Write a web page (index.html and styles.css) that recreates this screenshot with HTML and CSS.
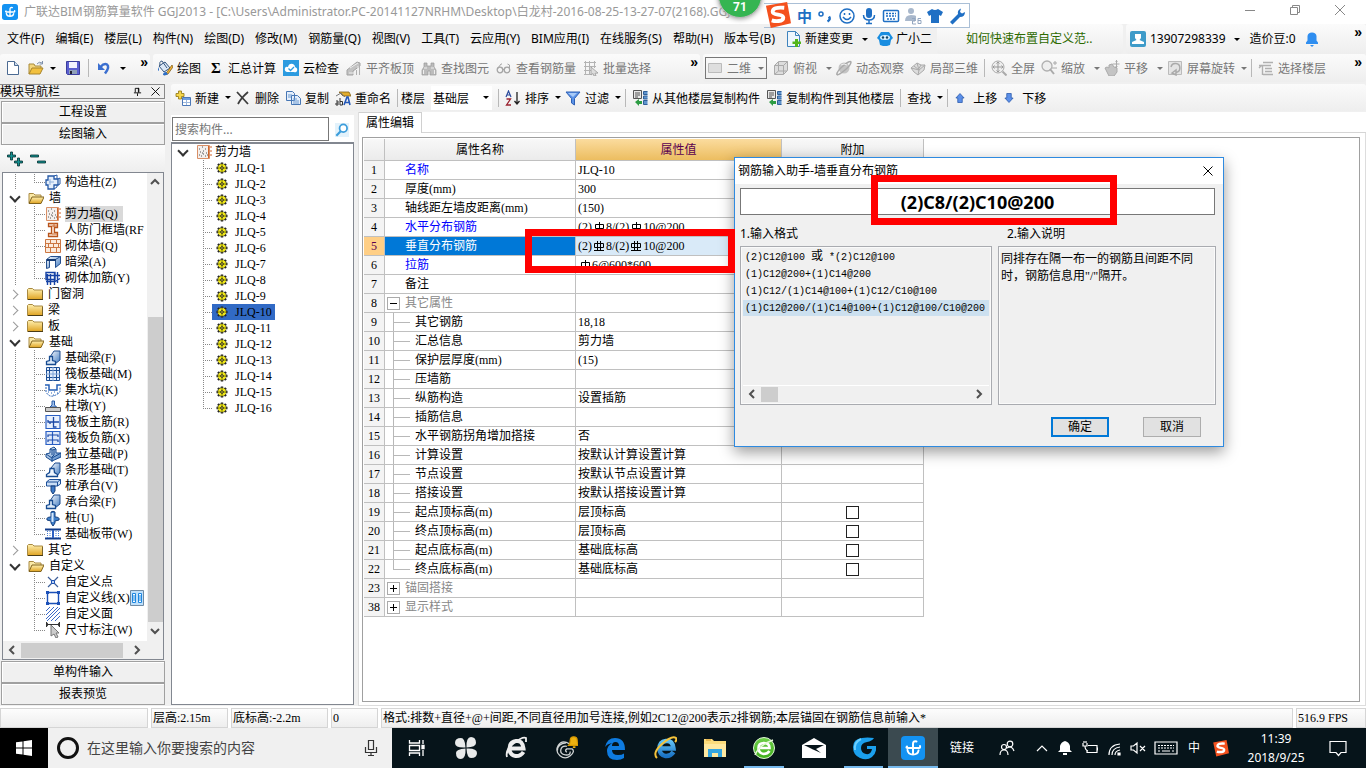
FILE: index.html
```html
<!DOCTYPE html>
<html lang="zh-CN">
<head>
<meta charset="utf-8">
<title>广联达BIM钢筋算量软件 GGJ2013</title>
<link rel="stylesheet" href="styles.css">
</head>
<body>
<svg class="sprite" aria-hidden="true">
  <defs>
    <linearGradient id="gold" x1="0" y1="0" x2="0" y2="1"><stop offset="0" stop-color="#fff0b0"/><stop offset="1" stop-color="#dfa322"/></linearGradient>
    <linearGradient id="steel" x1="0" y1="0" x2="1" y2="1"><stop offset="0" stop-color="#ffffff"/><stop offset="1" stop-color="#3c78c0"/></linearGradient>
    <linearGradient id="ie" x1="0" y1="0" x2="0" y2="1"><stop offset="0" stop-color="#63c3f5"/><stop offset="1" stop-color="#1b74c5"/></linearGradient>
    <linearGradient id="lime" x1="0" y1="0" x2="0" y2="1"><stop offset="0" stop-color="#6fd04a"/><stop offset="1" stop-color="#3fae1c"/></linearGradient>
  </defs>
  <symbol id="i-app" viewBox="0 0 24 24"><rect width="24" height="24" rx="4" fill="#1392f2"/><path d="M15.500 5.500Q12 4.500 12 8v10M6 10.500q-1.500 1.500 1 1.500h11q1.500 0 1-2M6.500 14q.500 4.500 5.500 4.500t5.500-4" fill="none" stroke="#fff" stroke-width="2" stroke-linecap="round"/></symbol>
  <symbol id="i-new" viewBox="0 0 16 16"><path d="M2.500 1.500h7l4 4v9h-11z" fill="#fff" stroke="#4b6a92"/><path d="M9.500 1.500v4h4" fill="#cfdcec" stroke="#4b6a92"/></symbol>
  <symbol id="i-open" viewBox="0 0 16 16"><path d="M1 14V4h5l1 2h6v3" fill="#f4d67c" stroke="#a88a3a"/><path d="M1 14l3-6h11l-3 6z" fill="#f2c03e" stroke="#a8842a"/><path d="M9 4q2-3 5-1M14.500 1v3h-3" fill="none" stroke="#7c8faa"/></symbol>
  <symbol id="i-save" viewBox="0 0 16 16"><path d="M1.500 1.500h13v13h-12l-1-1z" fill="#5b5fd0" stroke="#3a3d9c"/><path d="M4 2h8v6H4z" fill="#f2f2ff"/><path d="M4 10h8v4H4z" fill="#8fa0b8"/><path d="M5 11h2v3H5z" fill="#223"/></symbol>
  <symbol id="i-undo" viewBox="0 0 16 16"><path d="M4.500 7Q8 3 11 4.500 14 7 9 13.500" fill="none" stroke="#3b6fd0" stroke-width="2.500"/><path d="M2 3v7h7z" fill="#3b6fd0"/></symbol>
  <symbol id="i-paint" viewBox="0 0 16 16"><path d="M2 6l6-4 5 6-6 4z" fill="#dce8f6" stroke="#35567f"/><path d="M3 6Q2 1 5 1l5 7" fill="none" stroke="#35567f"/><path d="M2 7q-2 3 0 4z" fill="#2d6fc8"/><path d="M15 5l-5 7-3 3 4-1 5-7z" fill="#f1b332" stroke="#765317" stroke-width=".7"/><path d="M6 15q0-3 3-3l2 2q-2 2-5 1z" fill="#2d6fc8"/></symbol>
  <symbol id="i-cloud" viewBox="0 0 16 16"><rect width="16" height="16" fill="#2c9be0"/><path d="M4 12q-3-1-2-4 1-2 3-1 1-4 5-3 2 1 2 3 3 1 2 4-1 2-3 1z" fill="#fff"/><path d="M5.500 8.500l2 2L11 7" fill="none" stroke="#2c9be0" stroke-width="1.300"/></symbol>
  <symbol id="i-align" viewBox="0 0 16 16"><path d="M1 10l10-8 3 1v3L7 11v4H1z" fill="#c2c2c2" stroke="#a2a2a2"/><path d="M4 8l8-5M3 13h9M12 6v9M14 8v7" stroke="#eee"/><path d="M13.500 7v8M10.500 10v5" stroke="#b0b0b0"/></symbol>
  <symbol id="i-find" viewBox="0 0 16 16"><path d="M3 3h3v3h4V3h3v4l2 3v5H9v-4H7v4H1v-5l2-3z" fill="#bcbcbc" stroke="#999" stroke-width=".7"/><path d="M3 8h3M10 8h3M2.500 10v4M13.500 10v4" stroke="#eee"/></symbol>
  <symbol id="i-glass" viewBox="0 0 16 16"><circle cx="4" cy="10" r="2.800" fill="none" stroke="#a5a5a5" stroke-width="1.300"/><circle cx="11" cy="10" r="2.800" fill="none" stroke="#a5a5a5" stroke-width="1.300"/><path d="M6.500 9.500h2M2 8l3-4h1M13.500 9V5l-2-1" fill="none" stroke="#a5a5a5"/></symbol>
  <symbol id="i-batch" viewBox="0 0 16 16"><path d="M1 2.500h12M1 6.500h12M1 10.500h7M1 14.500h7M2.500 1v14M6.500 1v14M11.500 1v7" stroke="#b3b3b3"/><path d="M8 7l7 6-3 .3 1 2.700h-2l-1-2.500-2 1.500z" fill="#ddd" stroke="#999" stroke-width=".8"/></symbol>
  <symbol id="i-flat" viewBox="0 0 16 16"><path d="M1.500 3.500h13v9h-13z" fill="#dedede" stroke="#bbb"/></symbol>
  <symbol id="i-cube" viewBox="0 0 16 16"><path d="M1.500 5.500l4-4h9v9l-4 4h-9z" fill="#ddd" stroke="#aaa"/><path d="M1.500 5.500h9v9M10.500 5.500l4-4M5.500 2v9M2 14l3.500-3H14" fill="none" stroke="#aaa"/></symbol>
  <symbol id="i-orbit" viewBox="0 0 16 16"><circle cx="8" cy="8" r="5.500" fill="#c4c4c4"/><path d="M1 15Q0 12 7 6t8-4q0 3-6 8T1 15" fill="none" stroke="#aaa" stroke-width="1.500"/><path d="M5 5q3-2 6 0" stroke="#eee" fill="none"/></symbol>
  <symbol id="i-part" viewBox="0 0 16 16"><path d="M1 8l6-5 4 2 4 0-1 5-6 5-4-3z" fill="#ddd" stroke="#aaa"/><path d="M4 6l5 4M7 3l2 7-1 5M15 5L9 10l-8-2M11 5l-3 5" fill="none" stroke="#aaa"/></symbol>
  <symbol id="i-full" viewBox="0 0 16 16"><circle cx="7" cy="7" r="6" fill="#eee" stroke="#aaa"/><path d="M7 2v10M2 7h10M5.500 3.500L7 2l1.500 1.500M5.500 10.500L7 12l1.500-1.500M3.500 5.500L2 7l1.500 1.500M10.500 5.500L12 7l-1.500 1.500" fill="none" stroke="#999"/><path d="M11.500 11.500l4 4" stroke="#aaa" stroke-width="2"/></symbol>
  <symbol id="i-zoom" viewBox="0 0 16 16"><circle cx="6" cy="6" r="5" fill="#eee" stroke="#b0b0b0" stroke-width="1.300"/><path d="M9 9l4 5" stroke="#aaa" stroke-width="2"/><path d="M12 3h4M14 1v4M11 8h5" stroke="#aaa"/></symbol>
  <symbol id="i-pan" viewBox="0 0 16 16"><path d="M1 8l2-1 2 1 0-3 3-1 2 3 3 1v4l-3 4H5z" fill="#c4c4c4" stroke="#aaa"/><path d="M12.500 0v8M8.500 4h7M11.500 1.500h2M11.500 6.500h2" stroke="#aaa"/></symbol>
  <symbol id="i-rot" viewBox="0 0 16 16"><path d="M1.500 1.500h13v13h-13z" fill="#e4e4e4" stroke="#bbb"/><path d="M4 7a4.500 4.500 0 1 1 5 5.500M9 10v5l-4-2z" fill="none" stroke="#aaa" stroke-width="1.500"/></symbol>
  <symbol id="i-floor" viewBox="0 0 16 16"><path d="M5 2.500h10M1 5.500h12M7 8.500h7M7 11.500h7M5 14.500h10M4.500 5v10M1 8l3-3" fill="none" stroke="#b0b0b0" stroke-width="1.400"/></symbol>
  <symbol id="i-doc" viewBox="0 0 16 16"><path d="M1.500.500h8l4 4v11h-12z" fill="#eef6fd" stroke="#3f83bd"/><path d="M9.500.500v4h4" fill="none" stroke="#3f83bd"/><path d="M9 8h3v2.500h3V13h-3v3H9v-3H6.500v-2.500H9z" fill="#53b51b"/></symbol>
  <symbol id="i-bot" viewBox="0 0 16 16"><path d="M2 4l2-3h8l2 3 2 3-2 2-1 5-3 1H6l-3-1-1-5-2-2z" fill="#198de0"/><ellipse cx="8" cy="6.500" rx="5" ry="2.500" fill="#d8f0ff"/><circle cx="6" cy="6.500" r="1.200" fill="#146"/><circle cx="10" cy="6.500" r="1.200" fill="#146"/></symbol>
  <symbol id="i-user" viewBox="0 0 16 16"><rect width="16" height="16" rx="2" fill="#3e9bc9"/><path d="M5 3h6v4L9.500 9 14 11v2H2v-2l4.500-2L5 7z" fill="#fff"/></symbol>
  <symbol id="i-bell" viewBox="0 0 16 16"><path d="M2 13V11.500l1.500-2V5Q4 1.500 8 1.500T12.500 5v4.500l1.500 2V13zM6 14h4L8 16z" fill="#2f8ef0"/></symbol>
  <symbol id="i-add" viewBox="0 0 16 16"><path d="M3.500 1h3v2.500H9v3H6.500V9h-3V6.500H1v-3h2.500z" fill="#f5d64a" stroke="#8d7311" stroke-width=".8"/><path d="M7.500 7.500h8v8h-8z" fill="#fff" stroke="#4c78b8"/><path d="M8 8h7v2H8z" fill="#6e9ee0"/><path d="M8 12.500h7M11.500 10v5" stroke="#9db8dd"/></symbol>
  <symbol id="i-del" viewBox="0 0 16 16"><path d="M2 2l11 12M13 2Q6 8 3 14" fill="none" stroke="#3d3d3d" stroke-width="1.800"/></symbol>
  <symbol id="i-copy" viewBox="0 0 16 16"><path d="M1.500 1.500h6l2 2v7h-8zM6.500 5.500h6l3 3v6h-9z" fill="#e4eefb" stroke="#4676b4"/><path d="M3 5h4M3 7h3M8 9h4M8 11h6M8 13h6" stroke="#6d9ad0"/></symbol>
  <symbol id="i-ren" viewBox="0 0 16 16"><path d="M4 2h10l2 4H8z" fill="#e2ad2d" stroke="#815f17" stroke-width=".8"/><path d="M1 6l5-3 4 4" fill="none" stroke="#777"/><path d="M9 15l3-8h1l2 8M10 12.500h4" fill="none" stroke="#2459b8" stroke-width="1.600"/><path d="M1 11h2v4H1v-2h2M5 8v7h2.500v-3.500H5" fill="none" stroke="#333"/></symbol>
  <symbol id="i-sort" viewBox="0 0 16 16"><path d="M1 7l2.500-6L6 7M2 5h3" fill="none" stroke="#2a4a9c" stroke-width="1.200"/><path d="M1.500 9h4l-4 6h4.500" fill="none" stroke="#9b2330" stroke-width="1.300"/><path d="M12 2v12M9.500 11l2.500 3 2.500-3" fill="none" stroke="#222" stroke-width="1.300"/></symbol>
  <symbol id="i-fun" viewBox="0 0 16 16"><path d="M1 2h14L9.500 8.500V15l-3-2V8.500z" fill="#5b93e8" stroke="#2e60b4"/><path d="M3 3h9L8 7z" fill="#a9cbf8"/></symbol>
  <symbol id="i-fcopy" viewBox="0 0 16 16"><path d="M1.500.500h8v8h-8z" fill="#e8e8e8" stroke="#555"/><path d="M3 3h5M3 5h5M3 7h3" stroke="#555"/><path d="M3 12l4-3v2h3v3H7v2z" fill="#2d9c43"/><path d="M15.500 1.500h-4v3h4M15.500 6h-4v3h4M15.500 10.500h-4v4h4" fill="#5f93cc" stroke="#2e5f98"/></symbol>
  <symbol id="i-up" viewBox="0 0 16 16"><path d="M8 2l5.500 6H11v6H5V8H2.500z" fill="#5b8fe8" stroke="#2556aa"/></symbol>
  <symbol id="i-down" viewBox="0 0 16 16"><path d="M8 14l5.500-6H11V2H5v6H2.500z" fill="#5b8fe8" stroke="#2556aa"/></symbol>
  <symbol id="i-mag" viewBox="0 0 16 16"><rect width="16" height="16" fill="#e3f2fb"/><circle cx="9.500" cy="6" r="4.300" fill="#fff" stroke="#3c9ddb" stroke-width="2"/><path d="M6.500 9.500l-5 5" stroke="#3c9ddb" stroke-width="2.500"/></symbol>
  <symbol id="i-pin" viewBox="0 0 10 10"><path d="M2.500 6V1.500h4V6M1 6.500h8M5 7v3M6 1v5" fill="none" stroke="#000"/></symbol>
  <symbol id="i-x" viewBox="0 0 10 10"><path d="M.500.500l9 9M9.500.500l-9 9" stroke="currentColor" fill="none"/></symbol>
  <symbol id="i-plus2" viewBox="0 0 16 16"><path d="M3.500 1h2v3h3v2h-3v3h-2V6h-3V4h3zM10.500 7h2v3h3v2h-3v3h-2v-3h-3v-2h3z" fill="#149191" stroke="#042e2e" stroke-width=".8"/></symbol>
  <symbol id="i-min2" viewBox="0 0 16 16"><path d="M.500 4h8v2h-8zM7.500 10h8v2h-8z" fill="#149191" stroke="#042e2e" stroke-width=".8"/></symbol>
  <symbol id="i-fold" viewBox="0 0 16 16"><path d="M.500 13.500v-10l1-1h4l1.500 1.500h8.500v9.500z" fill="url(#gold)" stroke="#a98a42"/><path d="M1 13.500h15V5" fill="none" stroke="#4b3c15"/></symbol>
  <symbol id="i-foldo" viewBox="0 0 16 16"><path d="M1 13V3.500h4.500l1.500 1.500h6v2.500" fill="#fae9a7" stroke="#a98a42"/><path d="M1 13.500L4 7h12l-3 6.500z" fill="url(#gold)" stroke="#81631c"/></symbol>
  <symbol id="i-wall" viewBox="0 0 16 16"><path d="M1.500 1.500h12v13h-12z" fill="#f4efec" stroke="#d98f66"/><path d="M12.500 2v12" stroke="#d0652a"/><path d="M14 3h2M14 7h2M14 11h2" stroke="#d0652a"/><path d="M3 5h1M6 3h1M9 5h1M4 8h1M7 7h1M10 9h1M3 11h1M5 12h1M7 10h1M9 12h1M11 11h1M6 9h1" stroke="#555"/></symbol>
  <symbol id="i-col" viewBox="0 0 16 16"><path d="M3 2h6v3h4v6H9v4H3v-4H1V6h2z" fill="#e6effb" stroke="#2458a6" stroke-width="1.300"/><path d="M9 2l3-1v4M13 5l2-1v6l-2 1M9 15l3-2v-2" fill="none" stroke="#2458a6"/><path d="M5 5v6M4 8h5" stroke="#8fb2de"/></symbol>
  <symbol id="i-door" viewBox="0 0 16 16"><path d="M3.500 1.500h9v4h-3v5h3v4h-9v-3h3v-7h-3z" fill="#fbe4d4" stroke="#b8531b" stroke-width="1.300"/><path d="M7 4h5M7 12h5M9 1v4" stroke="#c96a33"/></symbol>
  <symbol id="i-brick" viewBox="0 0 16 16"><path d="M.500 1.500h15v13h-15zM.500 5.500h15M.500 9.500h15M5.500 2v3.500M11.500 2v3.500M3.500 6v3.500M8.500 6v3.500M13.500 6v3.500M5.500 10v4.500M11.500 10v4.500" fill="#fcebdd" stroke="#cc7742"/></symbol>
  <symbol id="i-beam" viewBox="0 0 16 16"><path d="M1.500 5.500l4-3h10l-5 3zM1.500 5.500v9l3-1v-8M10.500 5.500v8l5-4v-7" fill="url(#steel)" stroke="#244f8f"/><path d="M2 6h9" stroke="#163b73" stroke-width="2"/></symbol>
  <symbol id="i-rebar" viewBox="0 0 16 16"><path d="M2.500 15V4M5.500 15V4M9.500 15V2M12.500 13V2M1 2.500h9v7H1zM1 5.500h14M1 11.500h9l5-3" fill="none" stroke="#1743a5" stroke-width="1.400"/></symbol>
  <symbol id="i-fbeam" viewBox="0 0 16 16"><path d="M5 7L9 1h6v9l-5 4z" fill="url(#steel)" stroke="#1f4d8e"/><path d="M1.500 14.500v-3l3-1V6.500h3v4l3 1v3z" fill="#dbe9f8" stroke="#174b91" stroke-width="1.300"/></symbol>
  <symbol id="i-raft" viewBox="0 0 16 16"><path d="M1.500 1.500h13v13h-13z" fill="#e3edfb" stroke="#1d4f96"/><path d="M4.500 1v14M11.500 1v14M1 4.500h14M1 11.500h14" stroke="#1d4f96"/><path d="M8 1v14M1 8h14" stroke="#7fa4d8"/></symbol>
  <symbol id="i-pit" viewBox="0 0 16 16"><path d="M0 3h4v5h8V3h4" fill="none" stroke="#2660b6" stroke-width="1.500"/><path d="M1 5v5q3 5 7 4t7-4V5M3 10h1M6 11h1M9 10h1M12 11h1M8 13h1" fill="none" stroke="#2660b6" stroke-dasharray="2 1"/></symbol>
  <symbol id="i-pier" viewBox="0 0 16 16"><path d="M5 9l2-2V3h2.500v4l2 2z" fill="#9fc0ec" stroke="#2458a6"/><path d="M0.500 9.500h15v4h-15z" fill="#ccc" stroke="#555"/></symbol>
  <symbol id="i-main" viewBox="0 0 16 16"><path d="M1 1.500h14v13H1z" fill="#e8f0fd" stroke="#2a5fc4" stroke-width="1.200"/><path d="M3 6V8h11M8.500 3v10h3M5 8v2" fill="none" stroke="#1b48a5" stroke-width="1.300"/></symbol>
  <symbol id="i-neg" viewBox="0 0 16 16"><path d="M1 1.500h14v13H1zM7.500 1v14" fill="#dfe9fa" stroke="#2a5fc4" stroke-width="1.200"/><path d="M3 7V5h10v2M3 12v-2h10v2" fill="none" stroke="#1b48a5" stroke-width="1.200"/></symbol>
  <symbol id="i-iso" viewBox="0 0 16 16"><path d="M1 8l4-1V3l4-2 2 2v4l5 0v4l-9 4-6-4z" fill="url(#steel)" stroke="#174b91"/><path d="M1 8l6 4 9-5M7 12v4M5 3l2 1v5M7 4l4-1M9 4v5l-2 2" fill="none" stroke="#174b91"/></symbol>
  <symbol id="i-strip" viewBox="0 0 16 16"><path d="M6 6l4-5h5v9l-3 4z" fill="url(#steel)" stroke="#1f4d8e"/><path d="M1.500 14.500l0-2 3-2L5 6.500h4l.500 4 3 2v2z" fill="#eef5fd" stroke="#174b91" stroke-width="1.300"/></symbol>
  <symbol id="i-cap" viewBox="0 0 16 16"><path d="M1.500 4l3-2.500h11V6l-3 2h-11z" fill="#c9ddf5" stroke="#1c4f98"/><path d="M1.500 4h11v4M12.500 4l3-2.500" fill="none" stroke="#1c4f98"/><path d="M6 8h4v5l-2 3-2-3z" fill="#3e7bc8" stroke="#163f7c"/></symbol>
  <symbol id="i-pile" viewBox="0 0 16 16"><path d="M6 2q2-1.500 4 0v5q5 0 4 3l-4 1v2l-2 3-2-3v-2l-4-1q-1-3 4-3z" fill="#3f7fc9" stroke="#153f7e"/><path d="M7.500 3v9" stroke="#d8e9fb" stroke-width="2"/></symbol>
  <symbol id="i-band" viewBox="0 0 16 16"><path d="M0 3.500h16M0 12.500h16" stroke="#123c8b" stroke-width="2"/><path d="M2.500 5v7M13.500 5v7M5 5v7M11 5v7" stroke="#4a7cd0" stroke-dasharray="1 1"/><path d="M8 4v8" stroke="#2c5fc2" stroke-width="2"/></symbol>
  <symbol id="i-pt" viewBox="0 0 16 16"><path d="M3 3l10 10M13 3L3 13" stroke="#3d5f99" stroke-width="1.200"/><path d="M6.500 6.500h3v3h-3z" fill="#bcd3f5" stroke="#1d52b5"/></symbol>
  <symbol id="i-line" viewBox="0 0 16 16"><path d="M2.500 2.500h11v11h-11z" fill="none" stroke="#1b50b8" stroke-width="1.400"/><path d="M1 1h3v3H1zM12 1h3v3h-3zM1 12h3v3H1zM12 12h3v3h-3z" fill="#1b50b8"/></symbol>
  <symbol id="i-hatch" viewBox="0 0 16 16"><path d="M1 5l4-4M1 9l8-8M1 13l12-12M2 15L15 2M6 15l9-9M10 15l5-5" stroke="#3b69c8"/></symbol>
  <symbol id="i-dim" viewBox="0 0 16 16"><path d="M1.500 0v5M14.500 0v5M1 2.500h14M3 1L1 2.500 3 4M13 1l2 1.500L13 4" fill="none" stroke="#333"/><path d="M6 3v11l3-2 2 4 2-1-2-4h3z" fill="#ccc" stroke="#777"/></symbol>
  <symbol id="i-gear" viewBox="0 0 12 12"><path d="M6 .500v11M.500 6h11M2 2l8 8M10 2l-8 8" stroke="#222" stroke-width="2.400"/><circle cx="6" cy="6" r="4.300" fill="#f0e818" stroke="#333" stroke-dasharray="1 1"/><path d="M6 2v8M2 6h8" stroke="#4d4a05" stroke-width=".7"/><circle cx="6" cy="6" r="1.300" fill="#fff23a" stroke="#222"/></symbol>
  <symbol id="i-sogou" viewBox="0 0 28 28"><path d="M2 4L24 0l4 22-21 5z" fill="#f4511e"/><path d="M21 6Q9 5 9 10c0 4 11 2 11 6 0 5-9 4-12 3" fill="none" stroke="#fff" stroke-width="4"/></symbol>
  <symbol id="r2" viewBox="0 0 12 12"><path d="M6.500 1v10M2.500 3.500h8v4h-8zM2 10.500h9" fill="none" stroke="#000"/></symbol>
  <symbol id="r3" viewBox="0 0 12 12"><path d="M4.500 1v10M7.500 1v10M1.500 3.500h9v4h-9zM1 10.500h10" fill="none" stroke="#000"/></symbol>
</svg>

<div class="app">
  <header class="title">
    <svg class="ic"><use href="#i-app"/></svg>
    <h1>广联达BIM钢筋算量软件 GGJ2013 - [C:\Users\Administrator.PC-20141127NRHM\Desktop\白龙村-2016-08-25-13-27-07(2168).GGJ</h1>
    <div class="winctl">
      <button aria-label="最小化"><svg viewBox="0 0 12 12"><path d="M1 6.500h10"/></svg></button>
      <button aria-label="还原"><svg viewBox="0 0 12 12"><path d="M1.500 3.500h7v7h-7zM3.500 3V1.500h7v7H9"/></svg></button>
      <button aria-label="关闭"><svg viewBox="0 0 12 12"><path d="M1 1l10 10M11 1L1 11"/></svg></button>
    </div>
    <div class="ball">71</div>
    <div class="ime">
      <svg class="s" viewBox="0 0 28 28"><use href="#i-sogou"/></svg>
      <span>中</span>
      <svg viewBox="0 0 18 18"><circle cx="5" cy="7" r="2" fill="none" stroke="#1f6fc4" stroke-width="1.500"/><path d="M13 9.500q2 3-1.500 5" fill="none" stroke="#1f6fc4" stroke-width="2.500"/></svg>
      <svg viewBox="0 0 18 18" fill="none" stroke="#1f6fc4" stroke-width="1.500"><circle cx="9" cy="9" r="7"/><path d="M5 10q4 5 8 0M6.500 6v2M11.500 6v2"/></svg>
      <svg viewBox="0 0 18 18"><rect x="6" y="1" width="6" height="10" rx="3" fill="#1f6fc4"/><path d="M3.500 8q0 5 5.500 5t5.500-5M9 13v4M6 16.500h6" fill="none" stroke="#1f6fc4" stroke-width="1.500"/></svg>
      <svg viewBox="0 0 18 18"><rect x="1.500" y="3.500" width="15" height="11" rx="1" fill="#fff" stroke="#1f6fc4" stroke-width="1.500"/><path d="M4 6.500h10M4 9h10M5 12h8" stroke="#1f6fc4" stroke-width="1.500" stroke-dasharray="2 1"/></svg>
      <svg viewBox="0 0 18 18"><circle cx="7" cy="4" r="3" fill="#a9b8cc"/><path d="M1 14q0-6 6-6t5 2v4z" fill="#a9b8cc"/><path d="M8 11.500h3v2.500H8.500v3H12M17 11.500h-3v5h3v-3h-3" fill="none" stroke="#93a6c0"/></svg>
      <svg viewBox="0 0 18 18"><path d="M6 2q3 2 6 0l5 3-2 4-2-1v8H5V8L3 9 1 5z" fill="#1f6fc4"/></svg>
      <svg viewBox="0 0 18 18"><path d="M2 15l8-8q-1-4 3-5.500L12 5l2 1.500L17 5q0 5-5 5l-7.500 7.500z" fill="#1f6fc4"/></svg>
    </div>
  </header>

  <nav class="menubar">
    <div class="grp menus">
      <button>文件(F)</button><button>编辑(E)</button><button>楼层(L)</button><button>构件(N)</button><button>绘图(D)</button><button>修改(M)</button><button>钢筋量(Q)</button><button>视图(V)</button><button>工具(T)</button><button>云应用(Y)</button><button>BIM应用(I)</button><button>在线服务(S)</button><button>帮助(H)</button><button>版本号(B)</button>
      <button class="it"><svg class="ic"><use href="#i-doc"/></svg>新建变更<i class="car"></i></button>
      <button class="it"><svg class="ic"><use href="#i-bot"/></svg>广小二</button>
    </div>
    <div class="grp tip"><a href="#">如何快速布置自定义范..</a></div>
    <div class="grp user">
      <button class="it"><svg class="ic"><use href="#i-user"/></svg>13907298339<i class="car"></i></button>
      <span>造价豆:0</span>
      <svg class="ic"><use href="#i-bell"/></svg>
      <span class="more">»</span>
    </div>
  </nav>

  <div class="tools">
    <div class="grp file">
      <button aria-label="新建"><svg class="ic"><use href="#i-new"/></svg></button>
      <button class="it" aria-label="打开"><svg class="ic"><use href="#i-open"/></svg><i class="car"></i></button>
      <button aria-label="保存"><svg class="ic"><use href="#i-save"/></svg></button>
      <i class="sep"></i>
      <button class="it undo" aria-label="撤销"><svg class="ic"><use href="#i-undo"/></svg><i class="car"></i></button>
      <span class="more">»</span>
    </div>
    <div class="grp edit">
      <button class="it"><svg class="ic"><use href="#i-paint"/></svg>绘图</button>
      <button class="it"><b class="sigma">Σ</b>汇总计算</button>
      <button class="it"><svg class="ic"><use href="#i-cloud"/></svg>云检查</button>
      <button class="it off"><svg class="ic"><use href="#i-align"/></svg>平齐板顶</button>
      <button class="it off"><svg class="ic"><use href="#i-find"/></svg>查找图元</button>
      <button class="it off"><svg class="ic"><use href="#i-glass"/></svg>查看钢筋量</button>
      <button class="it off"><svg class="ic"><use href="#i-batch"/></svg>批量选择</button>
      <span class="more">»</span>
    </div>
    <div class="grp view">
      <label class="combo2 off"><svg class="ic"><use href="#i-flat"/></svg><select aria-label="视图模式"><option>二维</option></select><i class="car"></i></label>
      <button class="it off"><svg class="ic"><use href="#i-cube"/></svg>俯视<i class="car w"></i></button>
      <button class="it off"><svg class="ic"><use href="#i-orbit"/></svg>动态观察</button>
      <button class="it off"><svg class="ic"><use href="#i-part"/></svg>局部三维</button>
      <i class="sep"></i>
      <button class="it off"><svg class="ic"><use href="#i-full"/></svg>全屏</button>
      <button class="it off"><svg class="ic"><use href="#i-zoom"/></svg>缩放<i class="car w"></i></button>
      <button class="it off"><svg class="ic"><use href="#i-pan"/></svg>平移<i class="car w"></i></button>
      <button class="it off"><svg class="ic"><use href="#i-rot"/></svg>屏幕旋转<i class="car"></i></button>
      <i class="sep"></i>
      <button class="it off"><svg class="ic"><use href="#i-floor"/></svg>选择楼层</button>
      <span class="more">»</span>
    </div>
  </div>

  <div class="work">
    <aside class="nav">
      <div class="navhead"><span>模块导航栏</span><button aria-label="固定"><svg><use href="#i-pin"/></svg></button><button aria-label="关闭"><svg><use href="#i-x"/></svg></button></div>
      <button class="bar">工程设置</button>
      <button class="bar">绘图输入</button>
      <div class="mini"><button aria-label="全部展开"><svg class="ic"><use href="#i-plus2"/></svg></button><button aria-label="全部折叠"><svg class="ic"><use href="#i-min2"/></svg></button></div>
      <div class="treebox">
        <ul class="tree">
          <li class="leaf end"><svg><use href="#i-col"/></svg><span>构造柱(Z)</span></li>
          <li class="dir open"><svg><use href="#i-foldo"/></svg><span>墙</span></li>
          <li class="leaf cur"><svg><use href="#i-wall"/></svg><span>剪力墙(Q)</span></li>
          <li class="leaf"><svg><use href="#i-door"/></svg><span>人防门框墙(RF</span></li>
          <li class="leaf"><svg><use href="#i-brick"/></svg><span>砌体墙(Q)</span></li>
          <li class="leaf"><svg><use href="#i-beam"/></svg><span>暗梁(A)</span></li>
          <li class="leaf end"><svg><use href="#i-rebar"/></svg><span>砌体加筋(Y)</span></li>
          <li class="dir"><svg><use href="#i-fold"/></svg><span>门窗洞</span></li>
          <li class="dir"><svg><use href="#i-fold"/></svg><span>梁</span></li>
          <li class="dir"><svg><use href="#i-fold"/></svg><span>板</span></li>
          <li class="dir open"><svg><use href="#i-foldo"/></svg><span>基础</span></li>
          <li class="leaf"><svg><use href="#i-fbeam"/></svg><span>基础梁(F)</span></li>
          <li class="leaf"><svg><use href="#i-raft"/></svg><span>筏板基础(M)</span></li>
          <li class="leaf"><svg><use href="#i-pit"/></svg><span>集水坑(K)</span></li>
          <li class="leaf"><svg><use href="#i-pier"/></svg><span>柱墩(Y)</span></li>
          <li class="leaf"><svg><use href="#i-main"/></svg><span>筏板主筋(R)</span></li>
          <li class="leaf"><svg><use href="#i-neg"/></svg><span>筏板负筋(X)</span></li>
          <li class="leaf"><svg><use href="#i-iso"/></svg><span>独立基础(P)</span></li>
          <li class="leaf"><svg><use href="#i-strip"/></svg><span>条形基础(T)</span></li>
          <li class="leaf"><svg><use href="#i-cap"/></svg><span>桩承台(V)</span></li>
          <li class="leaf"><svg><use href="#i-fbeam"/></svg><span>承台梁(F)</span></li>
          <li class="leaf"><svg><use href="#i-pile"/></svg><span>桩(U)</span></li>
          <li class="leaf end"><svg><use href="#i-band"/></svg><span>基础板带(W)</span></li>
          <li class="dir"><svg><use href="#i-fold"/></svg><span>其它</span></li>
          <li class="dir open"><svg><use href="#i-foldo"/></svg><span>自定义</span></li>
          <li class="leaf last"><svg><use href="#i-pt"/></svg><span>自定义点</span></li>
          <li class="leaf last"><svg><use href="#i-line"/></svg><span>自定义线(X)</span><svg class="badge" viewBox="0 0 14 16"><path d="M.500.500h13v15H.500z" fill="#bfe0fb" stroke="#6f8ba5"/><path d="M2.500 3.500h3v9h-3zM8.500 3.500h3v9h-3zM3 6h2M3 8h2M3 10h2M9 6h2M9 8h2M9 10h2" fill="#fff" stroke="#1c86e0"/></svg></li>
          <li class="leaf last"><svg><use href="#i-hatch"/></svg><span>自定义面</span></li>
          <li class="leaf last end"><svg><use href="#i-dim"/></svg><span>尺寸标注(W)</span></li>
        </ul>
        <div class="vscroll"><svg class="arr" viewBox="0 0 10 10"><path d="M1 7l4-4 4 4"/></svg><i></i><svg class="arr" viewBox="0 0 10 10"><path d="M1 3l4 4 4-4"/></svg></div>
        <div class="hscroll"><svg class="arr" viewBox="0 0 10 10"><path d="M7 1L3 5l4 4"/></svg><i></i><svg class="arr" viewBox="0 0 10 10"><path d="M3 1l4 4-4 4"/></svg></div>
      </div>
      <button class="bar">单构件输入</button>
      <button class="bar">报表预览</button>
    </aside>

    <main class="main">
      <div class="grp tools2">
        <button class="it"><svg class="ic"><use href="#i-add"/></svg>新建<i class="car"></i></button>
        <button class="it"><svg class="ic"><use href="#i-del"/></svg>删除</button>
        <button class="it"><svg class="ic"><use href="#i-copy"/></svg>复制</button>
        <button class="it"><svg class="ic"><use href="#i-ren"/></svg>重命名</button>
        <i class="sep"></i>
        <label for="floor">楼层</label>
        <span class="combo"><select id="floor"><option>基础层</option></select><i class="car"></i></span>
        <i class="sep"></i>
        <button class="it"><svg class="ic"><use href="#i-sort"/></svg>排序<i class="car"></i></button>
        <button class="it"><svg class="ic"><use href="#i-fun"/></svg>过滤<i class="car"></i></button>
        <i class="sep"></i>
        <button class="it"><svg class="ic"><use href="#i-fcopy"/></svg>从其他楼层复制构件</button>
        <button class="it"><svg class="ic"><use href="#i-fcopy"/></svg>复制构件到其他楼层</button>
        <i class="sep"></i>
        <button class="it">查找<i class="car"></i></button>
        <i class="sep"></i>
        <button class="it"><svg class="ic sm"><use href="#i-up"/></svg>上移</button>
        <button class="it"><svg class="ic sm"><use href="#i-down"/></svg>下移</button>
      </div>
      <div class="cols">
        <section class="parts">
          <div class="search"><input type="text" placeholder="搜索构件..." aria-label="搜索构件"><button aria-label="搜索"><svg><use href="#i-mag"/></svg></button></div>
          <ul class="plist">
            <li class="root"><svg><use href="#i-wall"/></svg><span>剪力墙</span></li>
            <li><svg><use href="#i-gear"/></svg><span>JLQ-1</span></li>
            <li><svg><use href="#i-gear"/></svg><span>JLQ-2</span></li>
            <li><svg><use href="#i-gear"/></svg><span>JLQ-3</span></li>
            <li><svg><use href="#i-gear"/></svg><span>JLQ-4</span></li>
            <li><svg><use href="#i-gear"/></svg><span>JLQ-5</span></li>
            <li><svg><use href="#i-gear"/></svg><span>JLQ-6</span></li>
            <li><svg><use href="#i-gear"/></svg><span>JLQ-7</span></li>
            <li><svg><use href="#i-gear"/></svg><span>JLQ-8</span></li>
            <li><svg><use href="#i-gear"/></svg><span>JLQ-9</span></li>
            <li class="sel"><div><svg><use href="#i-gear"/></svg><span>JLQ-10</span></div></li>
            <li><svg><use href="#i-gear"/></svg><span>JLQ-11</span></li>
            <li><svg><use href="#i-gear"/></svg><span>JLQ-12</span></li>
            <li><svg><use href="#i-gear"/></svg><span>JLQ-13</span></li>
            <li><svg><use href="#i-gear"/></svg><span>JLQ-14</span></li>
            <li><svg><use href="#i-gear"/></svg><span>JLQ-15</span></li>
            <li class="end"><svg><use href="#i-gear"/></svg><span>JLQ-16</span></li>
          </ul>
        </section>
        <section class="props">
          <div class="tabs"><button>属性编辑</button></div>
          <div class="sheet">
            <div class="grid">
              <table>
                <colgroup><col class="c0"><col class="c1"><col class="c2"><col class="c3"></colgroup>
                <thead><tr><th></th><th>属性名称</th><th class="hot">属性值</th><th>附加</th></tr></thead>
                <tbody>
                  <tr><th>1</th><td class="key">名称</td><td>JLQ-10</td><td></td></tr>
                  <tr><th>2</th><td>厚度(mm)</td><td>300</td><td></td></tr>
                  <tr><th>3</th><td>轴线距左墙皮距离(mm)</td><td>(150)</td><td></td></tr>
                  <tr><th>4</th><td class="key">水平分布钢筋</td><td>(2)<svg class="rb"><use href="#r2"/></svg>8/(2)<svg class="rb"><use href="#r2"/></svg>10@200</td><td></td></tr>
                  <tr class="on"><th>5</th><td>垂直分布钢筋</td><td>(2)<svg class="rb"><use href="#r3"/></svg>8/(2)<svg class="rb"><use href="#r3"/></svg>10@200</td><td></td></tr>
                  <tr><th>6</th><td class="key">拉筋</td><td><svg class="rb"><use href="#r2"/></svg>6@600*600</td><td></td></tr>
                  <tr><th>7</th><td>备注</td><td></td><td></td></tr>
                  <tr class="dim"><th>8</th><td class="sec"><button class="minus" aria-label="折叠其它属性"></button>其它属性</td><td></td><td></td></tr>
                  <tr class="sub"><th>9</th><td>其它钢筋</td><td>18,18</td><td></td></tr>
                  <tr class="sub"><th>10</th><td>汇总信息</td><td>剪力墙</td><td></td></tr>
                  <tr class="sub"><th>11</th><td>保护层厚度(mm)</td><td>(15)</td><td></td></tr>
                  <tr class="sub"><th>12</th><td>压墙筋</td><td></td><td></td></tr>
                  <tr class="sub"><th>13</th><td>纵筋构造</td><td>设置插筋</td><td></td></tr>
                  <tr class="sub"><th>14</th><td>插筋信息</td><td></td><td></td></tr>
                  <tr class="sub"><th>15</th><td>水平钢筋拐角增加搭接</td><td>否</td><td></td></tr>
                  <tr class="sub"><th>16</th><td>计算设置</td><td>按默认计算设置计算</td><td></td></tr>
                  <tr class="sub"><th>17</th><td>节点设置</td><td>按默认节点设置计算</td><td></td></tr>
                  <tr class="sub"><th>18</th><td>搭接设置</td><td>按默认搭接设置计算</td><td></td></tr>
                  <tr class="sub"><th>19</th><td>起点顶标高(m)</td><td>层顶标高</td><td><input type="checkbox" aria-label="起点顶标高附加"></td></tr>
                  <tr class="sub"><th>20</th><td>终点顶标高(m)</td><td>层顶标高</td><td><input type="checkbox" aria-label="终点顶标高附加"></td></tr>
                  <tr class="sub"><th>21</th><td>起点底标高(m)</td><td>基础底标高</td><td><input type="checkbox" aria-label="起点底标高附加"></td></tr>
                  <tr class="sub end"><th>22</th><td>终点底标高(m)</td><td>基础底标高</td><td><input type="checkbox" aria-label="终点底标高附加"></td></tr>
                  <tr class="dim"><th>23</th><td class="sec"><button class="plus" aria-label="展开锚固搭接"></button>锚固搭接</td><td></td><td></td></tr>
                  <tr class="dim"><th>38</th><td class="sec"><button class="plus" aria-label="展开显示样式"></button>显示样式</td><td></td><td></td></tr>
                </tbody>
              </table>
            </div>
          </div>
        </section>
      </div>
    </main>
  </div>

  <footer class="status">
    <span class="s0"></span><span class="s1">层高:2.15m</span><span class="s2">底标高:-2.2m</span><span class="s3">0</span><span class="s4">格式:排数+直径+@+间距,不同直径用加号连接,例如2C12@200表示2排钢筋;本层锚固在钢筋信息前输入*</span><span class="s5">516.9 FPS</span>
  </footer>

  <div class="taskbar">
    <button class="start" aria-label="开始"><svg viewBox="0 0 16 16"><path d="M0 2.300L6.500 1.400v6.100H0zM7.500 1.200L16 0v7.500H7.500zM0 8.500h6.500v6.100L0 13.700zM7.500 8.500H16V16l-8.500-1.200z" fill="#fff"/></svg></button>
    <div class="cortana"><i class="ring"></i><input type="text" placeholder="在这里输入你要搜索的内容" aria-label="搜索"><svg viewBox="0 0 16 18"><path d="M5.500 1.500h5v9h-5zM2.500 8v5.500h11V8M8 13.500V17M5 16.500h6" fill="none" stroke="#333" stroke-width="1.200"/></svg></div>
    <div class="apps">
      <button aria-label="任务视图"><svg viewBox="0 0 24 24" fill="none" stroke="#fff" stroke-width="1.300"><path d="M4.500 4v3h10V4M4.500 20v-3h10v3M4.500 9.500h10v5h-10zM18 4v4M18 14v6"/><path d="M17 9.500h2v3h-2z" fill="#fff"/></svg></button>
      <button aria-label="应用"><svg viewBox="0 0 24 24" fill="#e8eaea"><path d="M11.500 11.500Q1 12 1 7t6-5q4 0 4.500 9.500zM12.500 11.500Q12 1 17 1t5 6q0 4-9.500 4.500zM12.500 12.500Q23 12 23 17t-6 5q-4 0-4.500-9.500zM11.500 12.500Q12 23 7 23t-5-6q0-4 9.500-4.500z"/></svg></button>
      <button aria-label="浏览器"><svg viewBox="0 0 24 24" fill="none" stroke="#eee"><path d="M19.500 16q-3 4.500-8 4-6-1-6-7.500T12 5t7.500 7.500H7" stroke-width="4"/><path d="M3 21Q1 14 10 7T22 2v4" stroke-width="1.800"/></svg></button>
      <button aria-label="提醒"><svg viewBox="0 0 28 28" fill="none" stroke="#d0d4d4" stroke-width="1.500"><path d="M18 9Q9 4 5 11T7 23t12 0 2-8h-6q-3 2 0 4M15 12q-6-1-7 4t5 6 6-4M14 8Q4 9 4 17"/><path d="M17 11q2-2 2-6t4-4 4 4 2 6z" fill="#eeb211" stroke="#d99a00"/><path d="M22 12h3v2h-3z" fill="#eeb211" stroke="none"/></svg></button>
      <button aria-label="Edge"><svg viewBox="0 0 24 24"><path d="M2 11Q4 2 12 2q10 0 10 12H9q0 5 6 5 4 0 6-1.500V22q-3 2-7 2-10 0-10-9 0-5 5-8-5 1-7 4zM9 10h7q0-4-3.500-4T9 10z" fill="#0e7be0"/></svg></button>
      <button aria-label="Internet Explorer"><svg viewBox="0 0 24 24" fill="none"><path d="M20.500 16q-3 4.500-8 4-6-1-6-7.500T13 5t7.500 7.500H8" stroke="url(#ie)" stroke-width="4.500"/><path d="M4 22Q-1 17 9 8T23 2q1 2-1 4" stroke="#f5c33b" stroke-width="2"/></svg></button>
      <button aria-label="文件资源管理器"><svg viewBox="0 0 24 24"><path d="M1 3h8l2 2h12v16H1z" fill="#fbdc7c"/><path d="M1 8h22v13H1z" fill="#ffe9a0"/><path d="M5 21v-8h14v8h-4v-4H9v4z" fill="#35a6e0"/><path d="M3 4h5" stroke="#d8972b"/></svg></button>
      <button class="run" aria-label="360浏览器"><svg viewBox="0 0 24 24" fill="none"><circle cx="12" cy="12" r="10.500" fill="url(#lime)" stroke="#dff5d5"/><path d="M17.500 15q-2 3-6 3-5-1-5-6t5.500-5 5.500 5H8" stroke="#fff" stroke-width="2.600"/><path d="M3 19Q7 9 21 4" stroke="#e8f9d8" stroke-width="1.500"/></svg></button>
      <button aria-label="邮件"><svg viewBox="0 0 24 24"><path d="M0 9l12-7 12 7v13H0z" fill="#fff"/><path d="M2 9h20l-8 4 5 4-8-3.500z" fill="#06141a"/></svg></button>
      <button class="run" aria-label="广联达"><svg viewBox="0 0 24 24"><path d="M22 2q-2 3-7 4-6 1-6 6t5 6 6-5h-5v-3h9q1 7-4 11t-12 1T1 11 10 2q5-1 12 0z" fill="#1ba0ee"/><path d="M9 3Q2 6 3 14" fill="none" stroke="#6cd0ff" stroke-width="2"/></svg></button>
      <button class="act" aria-label="钢筋算量"><svg><use href="#i-app"/></svg></button>
    </div>
    <div class="tray">
      <span class="links">链接</span>
      <svg class="ppl" viewBox="0 0 16 16"><circle cx="5" cy="7" r="2.500"/><circle cx="11" cy="4" r="2.800"/><path d="M1 15q0-5 4-5t4 5M8 8q5-3 7 3"/></svg>
      <svg class="up" viewBox="0 0 12 12"><path d="M1 9l5-5 5 5"/></svg>
      <svg class="fill" viewBox="0 0 16 16"><path d="M1 12l2-2V6q1-4 5-5 4 1 5 5v4l2 2zM6 13h4v2H6z"/></svg>
      <svg viewBox="0 0 16 16"><path d="M6 5.500h9v7H5V10M15 8h1v2h-1M1 3v3h4V3M2 1v2M4 1v2M3 6q0 4 3 5"/></svg>
      <svg viewBox="0 0 16 16"><path d="M3 15Q3 5 14 4M6 15q0-7 8-8M9 15q0-4 5-5"/><path d="M12 13h2v2h-2z" fill="#fff"/></svg>
      <svg viewBox="0 0 16 16"><path d="M1 6h2.500L7 3v10L3.500 10H1zM10 6l5 5M15 6l-5 5"/></svg>
      <svg class="kb" viewBox="0 0 24 14"><path d="M1 1h22v12H1z"/><path d="M4 4.500h16M4 7h16" stroke-dasharray="2 1"/><path d="M4 10h2M8 10h8M18 10h2"/></svg>
      <span class="zh">中</span>
      <svg class="sg" viewBox="0 0 28 28"><use href="#i-sogou"/></svg>
      <div class="clock"><time>11:39</time><time>2018/9/25</time></div>
      <svg class="note" viewBox="0 0 18 16"><path d="M1 1h16v11h-5l-2.500 3L7 12H1z"/></svg>
    </div>
  </div>

  <div class="mark cell"></div>
  <div class="dialog" role="dialog" aria-labelledby="dt">
    <div class="dhead"><h2 id="dt">钢筋输入助手-墙垂直分布钢筋</h2><button aria-label="关闭"><svg><use href="#i-x"/></svg></button></div>
    <div class="dbody">
      <input class="expr" type="text" value="(2)C8/(2)C10@200" aria-label="钢筋信息">
      <div class="dcols">
        <div><h3>1.输入格式</h3>
          <div class="box list">
            <ul><li>(2)C12@100 <b>或</b> *(2)C12@100</li><li>(1)C12@200+(1)C14@200</li><li>(1)C12/(1)C14@100+(1)C12/C10@100</li><li class="sel">(1)C12@200/(1)C14@100+(1)C12@100/C10@200</li></ul>
            <div class="hscroll"><svg class="arr" viewBox="0 0 10 10"><path d="M7 1L3 5l4 4"/></svg><i></i><svg class="arr" viewBox="0 0 10 10"><path d="M3 1l4 4-4 4"/></svg></div>
          </div>
        </div>
        <div><h3 class="in">2.输入说明</h3>
          <div class="box desc"><p>同排存在隔一布一的钢筋且间距不同时，钢筋信息用"/"隔开。</p></div>
        </div>
      </div>
      <div class="dbtns"><button class="ok">确定</button><button>取消</button></div>
    </div>
    <div class="mark expr-mark"></div>
  </div>
</div>
</body>
</html>
```
FILE: styles.css
```css
* { box-sizing: border-box; }
body {
  margin: 0;
  font: 12px/16px "Liberation Serif", "Noto Sans CJK SC", sans-serif;
  color: #000;
  background: #f0f0f0;
}
button, input, select { font: inherit; color: inherit; margin: 0; padding: 0; border: 0; background: none; border-radius: 0; }
button { white-space: nowrap; }
h1, h2, h3, p, ul { margin: 0; padding: 0; font-weight: normal; font-size: 12px; list-style: none; }
svg { display: block; flex: none; }
select { appearance: none; }
.sprite { position: absolute; width: 0; height: 0; }
.app { position: relative; min-height: 100vh; display: flex; flex-direction: column; overflow: hidden; }
.ic { width: 16px; height: 16px; }

/* title bar */
.title { position: relative; height: 24px; background: #fff; display: flex; align-items: center; padding: 0 20px 0 2px; gap: 6px; font-family: "Noto Sans", "Noto Sans CJK SC", sans-serif; color: #999; }
.title h1 { flex: 1; min-width: 0; white-space: nowrap; overflow: hidden; }
.winctl { display: flex; gap: 33px; padding-bottom: 4px; }
.winctl svg { width: 12px; height: 12px; fill: none; stroke: #888; }
.ball { position: absolute; left: 718px; top: -26px; width: 44px; height: 44px; border-radius: 50%; background: #35b552; border: 1px solid #bbb; box-shadow: 0 1px 5px #999; color: #fff; font: bold 12px/16px Roboto, sans-serif; text-align: center; padding-top: 24px; z-index: 2; }
.ime { position: absolute; left: 764px; top: 3px; height: 25px; width: 206px; z-index: 2; display: flex; align-items: center; gap: 4px; background: linear-gradient(90deg, transparent 12px, #fff 12px); border: 1px solid #aabfd6; border-left: 0; color: #1f6fc4; font: bold 15px/18px "Noto Sans CJK SC", sans-serif; }
.ime svg { width: 18px; height: 18px; }
.ime svg.s { width: 27px; height: 27px; }
.ime span { padding-left: 2px; }

/* menus and toolbars */
.menubar, .tools { display: flex; gap: 3px; height: 30px; font-family: "Noto Sans", "Noto Sans CJK SC", sans-serif; }
.grp { display: flex; align-items: center; background: linear-gradient(#fbfbfb, #eeeeee); border-radius: 3px; }
.it { display: flex; align-items: center; gap: 4px; }
.car { width: 0; height: 0; border: 3px solid transparent; border-top-color: currentColor; border-bottom: 0; margin: 0 2px; }
.off { color: #777; }
.sep { width: 1px; height: 18px; background: #b8b8b8; }
.more { margin-left: auto; font: bold 14px/16px "Liberation Sans", sans-serif; align-self: flex-start; }
.menus { flex: 0 0 934px; background: #f0f0f0; padding-left: 7px; gap: 11px; }
.menus .it { margin-right: -4px; gap: 3px; }
.menus .it .car { margin-left: 6px; }
.tip { flex: 0 0 186px; padding-left: 29px; }
.tip a { color: #2d6a00; text-decoration: none; }
.user { flex: 1; padding: 0 4px 0 4px; gap: 8px; }
.user .car { margin-left: 4px; }
.tools { font-family: "Noto Sans CJK SC", sans-serif; padding-bottom: 2px; }
.file { flex: 0 0 150px; padding: 0 2px 0 5px; gap: 7px; }
.file .undo .car { margin-left: 4px; }
.edit { flex: 0 0 547px; padding: 0 2px 0 4px; gap: 7px; }
.sigma { width: 16px; text-align: center; font: bold 15px/16px "Liberation Serif", serif; }
.view { flex: 1; padding: 0 4px 0 2px; gap: 6px; }
.view .it .car { margin: 0 -2px 0 2px; }
.view .it .car.w { margin-left: 5px; }
.combo2 { display: flex; align-items: center; gap: 4px; width: 62px; height: 22px; border: 1px solid #777; padding-left: 1px; }
.combo2 select { width: 28px; color: #777; }

.work { flex: 1; display: flex; gap: 6px; }

/* module navigator */
.nav { width: 165px; display: flex; flex-direction: column; padding-bottom: 1px; }
.navhead { display: flex; align-items: center; height: 15px; border: 1px solid #888; border-left: 0; padding-right: 4px; gap: 9px; margin-bottom: 2px; }
.navhead span { flex: 1; }
.navhead svg { width: 9px; height: 9px; }
.bar { height: 22px; border: 1px solid #a0a0a0; box-shadow: inset 1px 1px #fff; margin-left: 1px; line-height: 18px; }
.mini { height: 27px; display: flex; align-items: center; gap: 7px; padding-left: 7px; background: linear-gradient(#fcfcfc, #eeeeee); }
.treebox { flex: 1; display: grid; grid-template: 1fr 18px / 1fr 16px; border: 1px solid #828790; margin: 0 1px 1px 2px; background: #f0f0f0; }
.tree { background: #fff; overflow: hidden; min-width: 0; padding-top: 1px; white-space: nowrap; }
.tree li { display: flex; align-items: center; height: 16px; line-height: 16px; }
.tree li svg { width: 16px; height: 16px; }
.leaf {
  --v: repeating-linear-gradient(180deg, #888 0 1px, transparent 1px 2px);
  --h: repeating-linear-gradient(90deg, #888 0 1px, transparent 1px 2px);
  padding-left: 42px; gap: 4px;
  background: var(--v) 12px 0/1px 100% no-repeat, var(--v) 31px 0/1px 100% no-repeat, var(--h) 31px 8px/11px 1px no-repeat;
}
.leaf.end { background-size: 1px 100%, 1px 8px, 11px 1px; }
.leaf.last { background-size: 0 0, 1px 100%, 11px 1px; }
.leaf.last.end { background-size: 0 0, 1px 8px, 11px 1px; }
.leaf.cur span { background: #d9d9d9; padding-right: 5px; }
.leaf .badge { width: 14px; margin-left: -4px; }
.dir { padding-left: 9px; gap: 5px; }
.dir::before { content: ""; width: 6px; height: 6px; border: solid #999; border-width: 1px 1px 0 0; transform: rotate(45deg); margin: 0 5px 0 -2px; flex: none; }
.dir.open::before { border-color: #333; border-width: 2px 2px 0 0; transform: rotate(135deg); margin: -3px 4px 0 -1px; }
.arr { width: 10px; height: 10px; fill: none; stroke: #505050; stroke-width: 2; }
.vscroll { display: flex; flex-direction: column; align-items: center; padding: 4px 0 5px; }
.vscroll i { width: 15px; background: #cdcdcd; margin: 130px 0 4px; flex: 1; }
.hscroll { display: flex; align-items: center; gap: 4px; padding: 0 5px 0 4px; }
.hscroll i { flex: 0 0 102px; height: 15px; background: #cdcdcd; }
.hscroll .arr:last-child { margin-left: auto; }

/* main area */
.main { flex: 1; min-width: 0; display: flex; flex-direction: column; }
.tools2 { height: 27px; padding-left: 4px; gap: 6px; font-family: "Noto Sans CJK SC", sans-serif; }
.tools2 .it .car { margin-right: -2px; }
.tools2 label { margin-left: -3px; }
.tools2 .ic.sm { width: 12px; height: 12px; margin-right: 3px; }
.combo { display: flex; align-items: center; background: #fff; height: 24px; padding: 0 1px 0 2px; width: 61px; justify-content: space-between; }
.cols { flex: 1; display: flex; gap: 4px; }
.parts { width: 183px; display: flex; flex-direction: column; background: #fff; margin: 4px 0 1px; }
.search { display: flex; height: 27px; padding: 2px 0 0 1px; }
.search input { width: 157px; height: 24px; border: 1px solid #777; padding-left: 2px; font: 12px/20px "Noto Sans", "Noto Sans CJK SC", sans-serif; }
.search input::placeholder { color: #777; opacity: 1; }
.search button { flex: 1; display: grid; place-items: center; }
.search svg { width: 14px; height: 14px; }
.plist { flex: 1; border: 1px solid #828790; border-width: 2px 1px 1px; }
.plist li {
  --v: repeating-linear-gradient(180deg, #888 0 1px, transparent 1px 2px);
  --h: repeating-linear-gradient(90deg, #888 0 1px, transparent 1px 2px);
  display: flex; align-items: center; height: 16px; padding-left: 44px; gap: 7px;
  background: var(--v) 31px 0/1px 100% no-repeat, var(--h) 31px 8px/10px 1px no-repeat;
}
.plist li.end { background-size: 1px 8px, 10px 1px; }
.plist svg { width: 12px; height: 12px; }
.plist li.root { background: none; padding-left: 6px; gap: 3px; }
.plist li.root::before { content: ""; width: 6px; height: 6px; border: solid #333; border-width: 2px 2px 0 0; transform: rotate(135deg); margin: -3px 6px 0 1px; }
.plist .root svg { width: 16px; height: 16px; }
.plist li.sel { padding-left: 40px; }
.plist .sel div { display: flex; align-items: center; gap: 7px; background: #316ac5; padding: 0 3px 0 4px; height: 16px; }

.props { flex: 1; min-width: 0; display: flex; flex-direction: column; border-left: 1px solid #ddd; background: #fff; margin-top: 1px; }
.tabs { height: 21px; display: flex; border-bottom: 1px solid #d5d5d5; background: #fff; }
.tabs button { width: 63px; height: 21px; border: 1px solid #d0d0d0; border-bottom: 0; background: #fff; line-height: 18px; border-left: 0; }
.sheet { flex: 1; padding: 4px 5px 3px 3px; border-bottom: 1px solid #ddd; border-right: 1px solid #ddd; }
.grid { height: 100%; border: 1px solid #a0a0a0; padding: 1px 0 0 1px; }
table { table-layout: fixed; width: 560px; border-spacing: 0; }
.c0 { width: 21px; } .c1 { width: 191px; } .c2 { width: 206px; } .c3 { width: 142px; }
th, td { height: 19px; padding: 0; border: solid #c0c0c0; border-width: 0 1px 1px 0; text-align: left; font-weight: normal; line-height: 16px; overflow: hidden; white-space: nowrap; }
thead th { height: 22px; text-align: center; background: linear-gradient(#f8f8f8, #ebebeb); }
thead th.hot { background: linear-gradient(#fbdc9e, #ecbd60); color: #5a0050; }
tbody th { text-align: center; background: #f4f4f4; }
td:nth-child(2) { padding-left: 20px; }
td:nth-child(3) { padding-left: 2px; }
td:nth-child(4) { text-align: center; }
td.key { color: #00f; }
.rb { display: inline-block; width: 12px; height: 12px; vertical-align: -2px; margin: 0 1px; }
.on th { background: #ffcf86; color: #5a0050; }
.on td:nth-child(2) { background: #0078d7; color: #fff; }
.on td:nth-child(3) { background: #d9eaf8; }
.dim td { color: #888; }
td.sec:nth-child(2) { padding-left: 2px; }
.sec button { width: 13px; height: 13px; border: 1px solid #aaa; margin-right: 5px; vertical-align: -2px; background: linear-gradient(#000, #000) center/7px 1px no-repeat; }
.sec .plus { background: linear-gradient(#000, #000) center/7px 1px no-repeat, linear-gradient(#000, #000) center/1px 7px no-repeat; }
.sub td:nth-child(2) { padding-left: 30px; background: linear-gradient(#b8b8b8, #b8b8b8) 8px 0/1px 100% no-repeat, linear-gradient(#b8b8b8, #b8b8b8) 8px 9px/17px 1px no-repeat; }
.sub.end td:nth-child(2) { background-size: 1px 9px, 17px 1px; }
td input { appearance: none; display: block; width: 13px; height: 13px; border: 1px solid #222; background: #fff; margin: 0 auto; }

/* status bar */
.status { display: flex; gap: 3px; height: 22px; padding: 2px 0 0; background: #fff; }
.status span { border: 1px solid #d5d5d5; background: linear-gradient(#fdfdfd, #eeeeee); line-height: 18px; padding-left: 1px; white-space: nowrap; overflow: hidden; }
.s0 { flex: 0 0 148px; } .s1 { flex: 0 0 77px; } .s2 { flex: 0 0 97px; } .s3 { flex: 0 0 47px; } .s4 { flex: 1; } .s5 { flex: 0 0 70px; }

/* taskbar */
.taskbar { display: flex; height: 40px; background: #06141a; color: #fff; font-family: "Noto Sans", "Noto Sans CJK SC", sans-serif; }
.start { width: 48px; background: #000; display: grid; place-items: center; }
.start svg { width: 16px; height: 16px; }
.cortana { flex: 0 0 344px; background: #f0f0f0; display: flex; align-items: center; padding: 0 13px 0 9px; gap: 8px; }
.ring { width: 22px; height: 22px; border: 3px solid #111; border-radius: 50%; }
.cortana input { flex: 1; min-width: 0; font-size: 14px; line-height: 20px; }
.cortana input::placeholder { color: #444; opacity: 1; }
.cortana svg { width: 16px; height: 18px; }
.apps { flex: 0 0 546px; display: flex; }
.apps button { flex: 1; display: grid; place-items: center; position: relative; }
.apps svg { width: 24px; height: 24px; }
.apps .run::after { content: ""; position: absolute; bottom: 0; left: 5px; right: 5px; height: 2px; background: #76b9ed; }
.apps .act { background: #3b4a50; box-shadow: inset 0 -2px #76b9ed; }
.tray { flex: 1; display: flex; align-items: center; padding-left: 12px; gap: 8px; }
.tray svg { width: 16px; height: 16px; fill: none; stroke: #fff; stroke-width: 1.2; }
.tray .fill { fill: #fff; stroke: none; margin: 0 1px; }
.tray .ppl { margin: 0 13px 0 17px; }
.tray .up { width: 12px; height: 12px; }
.tray .kb { width: 24px; height: 14px; }
.zh { font-size: 12px; padding: 0 4px 0 2px; }
.tray svg.sg { width: 17px; height: 17px; stroke: none; }
.clock { width: 76px; display: flex; flex-direction: column; align-items: center; line-height: 19px; padding: 0 0 0 2px; }
.tray .note { width: 18px; height: 17px; margin-left: 8px; }

/* input helper dialog */
.dialog { position: absolute; left: 734px; top: 157px; width: 490px; background: #f0f0f0; border: 1px solid #2e8ae0; box-shadow: 0 5px 14px rgba(0, 0, 0, .4); }
.dhead { height: 26px; background: #fff; display: flex; align-items: center; justify-content: space-between; padding: 0 10px 0 3px; }
.dhead svg { width: 10px; height: 10px; }
.dbody { padding: 4px 7px 9px 5px; display: flex; flex-direction: column; }
.expr { width: 475px; height: 27px; border: 1px solid #777; background: #fff; text-align: center; font: bold 18px/24px "Noto Sans", sans-serif; }
.dcols { display: grid; grid-template-columns: 252px 218px; gap: 6px; padding-top: 11px; }
h3 { line-height: 16px; margin-bottom: 4px; font-family: "Noto Sans", "Noto Sans CJK SC", sans-serif; }
h3.in { padding-left: 9px; }
.box { height: 159px; border: 1px solid #a9abb0; box-shadow: inset 0 0 0 1px #fafafa; padding: 2px; display: flex; flex-direction: column; }
.list ul { flex: 1; }
.list li { height: 17px; padding-left: 2px; font: 10px/17px "Liberation Mono", "Noto Sans CJK SC", monospace; white-space: nowrap; }
.list b { font-size: 12px; font-weight: normal; line-height: 16px; }
.list li.sel { background: #cce0ef; height: 16px; }
.list .hscroll { height: 17px; border-top: 1px solid #fff; }
.list .hscroll i { flex-basis: 17px; }
.desc p { line-height: 17px; padding: 2px 0; }
.dbtns { display: flex; justify-content: flex-end; gap: 34px; padding: 12px 15px 0 0; }
.dbtns button { width: 58px; height: 20px; border: 1px solid #adadad; background: #e1e1e1; line-height: 16px; }
.dbtns .ok { border: 2px solid #0078d7; }

/* red highlight frames */
.mark { position: absolute; border: 7px solid #f00; pointer-events: none; }
.mark.cell { left: 525px; top: 229px; width: 210px; height: 44px; z-index: 3; }
.expr-mark { left: 136px; top: 17px; width: 246px; height: 50px; }
```
